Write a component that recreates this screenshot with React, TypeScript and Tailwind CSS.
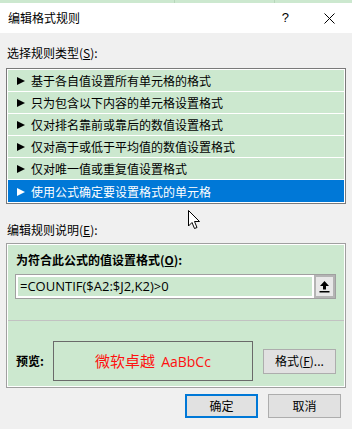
const rules = [
  "基于各自值设置所有单元格的格式",
  "只为包含以下内容的单元格设置格式",
  "仅对排名靠前或靠后的数值设置格式",
  "仅对高于或低于平均值的数值设置格式",
  "仅对唯一值或重复值设置格式",
  "使用公式确定要设置格式的单元格",
];

const font = "font-['Microsoft_YaHei_UI','Noto_Sans_CJK_SC',sans-serif]";

const Arrow = ({ white }: { white?: boolean }) => (
  <svg width="8" height="8" viewBox="0 0 8 8" className="shrink-0">
    <path d="M0 0 L8 4 L0 8 Z" fill={white ? "#ffffff" : "#000000"} />
  </svg>
);

export default function App() {
  return (
    <div className={`relative w-[352px] h-[429px] overflow-hidden bg-[#f0f0f0] text-[12px] text-black ${font}`}>
      {/* excel grid peeking above the dialog */}
      <div className="flex h-[3px] bg-[#cce8cf]">
        <div className="w-[175px] border-r border-[#b7d6ba]" />
        <div className="w-[100px] border-r border-[#b7d6ba]" />
      </div>

      {/* title bar */}
      <div className="flex h-[30px] items-center bg-white pl-[8px]">
        <span className="leading-[16px]">编辑格式规则</span>
        <span className="ml-auto mr-[35px] text-[13px] font-['Liberation_Sans',sans-serif]">?</span>
        <svg width="11" height="11" viewBox="0 0 11 11" className="mr-[17px]">
          <path d="M0.5 0.5 L10.5 10.5 M10.5 0.5 L0.5 10.5" stroke="#000" strokeWidth="1" />
        </svg>
      </div>

      <div className="px-[6px]">
        <div className="mt-[12px] h-[16px] pl-[1px] leading-[16px]">
          选择规则类型(<span className="underline">S</span>):
        </div>

        <div className="mt-[7px] border border-[#7a7a7a]">
          <div className="flex flex-col border border-white">
            {rules.map((r, i) => {
              const sel = i === rules.length - 1;
              return (
                <div
                  key={r}
                  className={`flex h-[22px] items-center gap-[6px] pl-[9px] pt-[1px] ${sel ? "bg-[#0078d7] text-white" : "bg-[#cce8cf] border-b border-white"}`}
                >
                  <Arrow white={sel} />
                  <span className="leading-[16px]">{r}</span>
                </div>
              );
            })}
          </div>
        </div>

        <div className="mt-[18px] h-[16px] pl-[1px] leading-[16px]">
          编辑规则说明(<span className="underline">E</span>):
        </div>

        <div className="mt-[5px] border border-[#a0a0a0]">
          <div className="h-[143px] border border-white bg-[#cce8cf]">
            <div className="ml-[8px] mt-[7px] h-[16px] font-bold leading-[16px]">
              为符合此公式的值设置格式(<span className="underline">O</span>):
            </div>
            <div className="ml-[7px] mr-[8px] mt-[6px] flex h-[25px] border border-[#a0a0a0]">
              <div className="flex flex-1 items-center border-2 border-white bg-[#cce8cf] pl-[2px] font-['Open_Sans','Noto_Sans',sans-serif] text-[13px]">
                =COUNTIF($A2:$J2,K2)&gt;0
              </div>
              <div className="flex w-[21px] items-center justify-center border-2 border-[#b4b4b4] bg-[#e8e8e8]">
                <svg width="11" height="13" viewBox="0 0 11 13">
                  <path d="M5.5 1 L10 6 L7 6 L7 9.5 L4 9.5 L4 6 L1 6 Z" fill="#000" />
                  <rect x="0.5" y="11" width="10" height="1.5" fill="#000" />
                </svg>
              </div>
            </div>
            <div className="mt-[21px] h-[1px] bg-[#c2c2c2]" />
            <div className="mt-[20px] flex items-center">
              <span className="ml-[8px] w-[37px] font-bold leading-[16px]">预览:</span>
              <div className="flex h-[40px] w-[200px] items-center justify-center gap-[6px] border-[1.5px] border-[#6a6a6a] text-[15px] text-[#ff1010]">
                <span className="leading-[18px]">微软卓越</span>
                <span className="font-['Open_Sans','Noto_Sans',sans-serif] text-[14px]">AaBbCc</span>
              </div>
              <button className="ml-[10px] flex h-[25px] w-[73px] items-center justify-center border border-[#adadad] bg-[#e1e1e1] leading-[16px]">
                格式(<span className="underline">F</span>)...
              </button>
            </div>
          </div>
        </div>

        <div className="mt-[6px] flex justify-end gap-[10px] pr-[5px]">
          <button className="flex h-[24px] w-[73px] items-center justify-center border-2 border-[#0078d7] bg-[#e1e1e1] leading-[16px]">
            确定
          </button>
          <button className="flex h-[24px] w-[73px] items-center justify-center border border-[#adadad] bg-[#e1e1e1] leading-[16px]">
            取消
          </button>
        </div>
      </div>

      {/* mouse pointer */}
      <svg className="absolute left-[188px] top-[210px]" width="13" height="20" viewBox="0 0 13 20">
        <path d="M0.5 0.5 L0.5 16 L4 12.5 L6.5 18.5 L9 17.5 L6.5 11.5 L11.5 11.5 Z" fill="#fff" stroke="#000" strokeWidth="1" strokeLinejoin="miter" />
      </svg>
    </div>
  );
}
